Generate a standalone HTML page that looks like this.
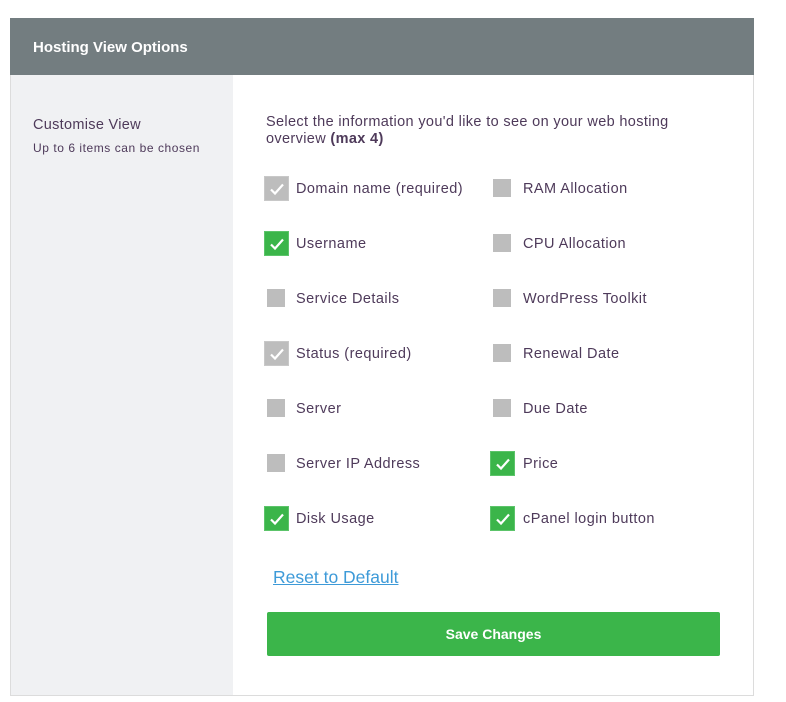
<!DOCTYPE html>
<html><head><meta charset="utf-8"><style>
*{margin:0;padding:0;box-sizing:border-box}
body{width:786px;height:702px;background:#fff;font-family:"Liberation Sans",sans-serif;position:relative;overflow:hidden}
.box{position:absolute;left:10px;top:18px;width:744px;height:678px;border:1px solid #dcdcdc;border-top:none}
.hdr{position:absolute;left:10px;top:18px;width:744px;height:57px;background:#737d80;color:#fff;font-weight:bold;font-size:15px;padding:21px 0 0 23px}
.side{position:absolute;left:11px;top:75px;width:222px;height:620px;background:#f0f1f3}
.t{position:absolute;color:#4e3a5a}
.cb{position:absolute;width:18px;height:18px;background:#bdbdbd}
.ck{position:absolute;width:25px;height:25px;background:#3bb54a;border:1px solid #5cc46a}
.ck.g{background:#bdbdbd;border-color:#c8c8c8}
.ck svg{position:absolute;left:4px;top:4px}
.lbl{position:absolute;font-size:14.5px;color:#4e3a5a;line-height:18px;letter-spacing:0.45px;margin-top:1px}
</style></head><body>
<div class="box"></div>
<div class="hdr">Hosting View Options</div>
<div class="side"></div>
<div class="t" style="left:33px;top:117px;font-size:14.5px;letter-spacing:0.3px">Customise View</div>
<div class="t" style="left:33px;top:141px;font-size:12px;letter-spacing:0.55px">Up to 6 items can be chosen</div>
<div class="t" style="left:266px;top:114px;font-size:14.5px;line-height:17px;width:440px;letter-spacing:0.35px">Select the information you'd like to see on your web hosting overview <b>(max 4)</b></div>

<div class="ck g" style="left:264px;top:176px"><svg width="16" height="16" viewBox="0 0 16 16"><path d="M2 8.5l4 4 8-9" stroke="#fff" stroke-width="2.2" fill="none"/></svg></div>
<div class="lbl" style="left:296px;top:179px">Domain name (required)</div>
<div class="ck" style="left:264px;top:231px"><svg width="16" height="16" viewBox="0 0 16 16"><path d="M2 8.5l4 4 8-9" stroke="#fff" stroke-width="2.2" fill="none"/></svg></div>
<div class="lbl" style="left:296px;top:234px">Username</div>
<div class="cb" style="left:267px;top:289px"></div>
<div class="lbl" style="left:296px;top:289px">Service Details</div>
<div class="ck g" style="left:264px;top:341px"><svg width="16" height="16" viewBox="0 0 16 16"><path d="M2 8.5l4 4 8-9" stroke="#fff" stroke-width="2.2" fill="none"/></svg></div>
<div class="lbl" style="left:296px;top:344px">Status (required)</div>
<div class="cb" style="left:267px;top:399px"></div>
<div class="lbl" style="left:296px;top:399px">Server</div>
<div class="cb" style="left:267px;top:454px"></div>
<div class="lbl" style="left:296px;top:454px">Server IP Address</div>
<div class="ck" style="left:264px;top:506px"><svg width="16" height="16" viewBox="0 0 16 16"><path d="M2 8.5l4 4 8-9" stroke="#fff" stroke-width="2.2" fill="none"/></svg></div>
<div class="lbl" style="left:296px;top:509px">Disk Usage</div>

<div class="cb" style="left:493px;top:179px"></div>
<div class="lbl" style="left:523px;top:179px">RAM Allocation</div>
<div class="cb" style="left:493px;top:234px"></div>
<div class="lbl" style="left:523px;top:234px">CPU Allocation</div>
<div class="cb" style="left:493px;top:289px"></div>
<div class="lbl" style="left:523px;top:289px">WordPress Toolkit</div>
<div class="cb" style="left:493px;top:344px"></div>
<div class="lbl" style="left:523px;top:344px">Renewal Date</div>
<div class="cb" style="left:493px;top:399px"></div>
<div class="lbl" style="left:523px;top:399px">Due Date</div>
<div class="ck" style="left:490px;top:451px"><svg width="16" height="16" viewBox="0 0 16 16"><path d="M2 8.5l4 4 8-9" stroke="#fff" stroke-width="2.2" fill="none"/></svg></div>
<div class="lbl" style="left:523px;top:454px">Price</div>
<div class="ck" style="left:490px;top:506px"><svg width="16" height="16" viewBox="0 0 16 16"><path d="M2 8.5l4 4 8-9" stroke="#fff" stroke-width="2.2" fill="none"/></svg></div>
<div class="lbl" style="left:523px;top:509px">cPanel login button</div>

<div style="position:absolute;left:273px;top:567px;font-size:17.5px;color:#3d9ad8;text-decoration:underline">Reset to Default</div>
<div style="position:absolute;left:267px;top:612px;width:453px;height:44px;background:#3bb54a;border-radius:2px;color:#fff;font-weight:bold;font-size:14px;text-align:center;line-height:44px">Save Changes</div>
</body></html>
